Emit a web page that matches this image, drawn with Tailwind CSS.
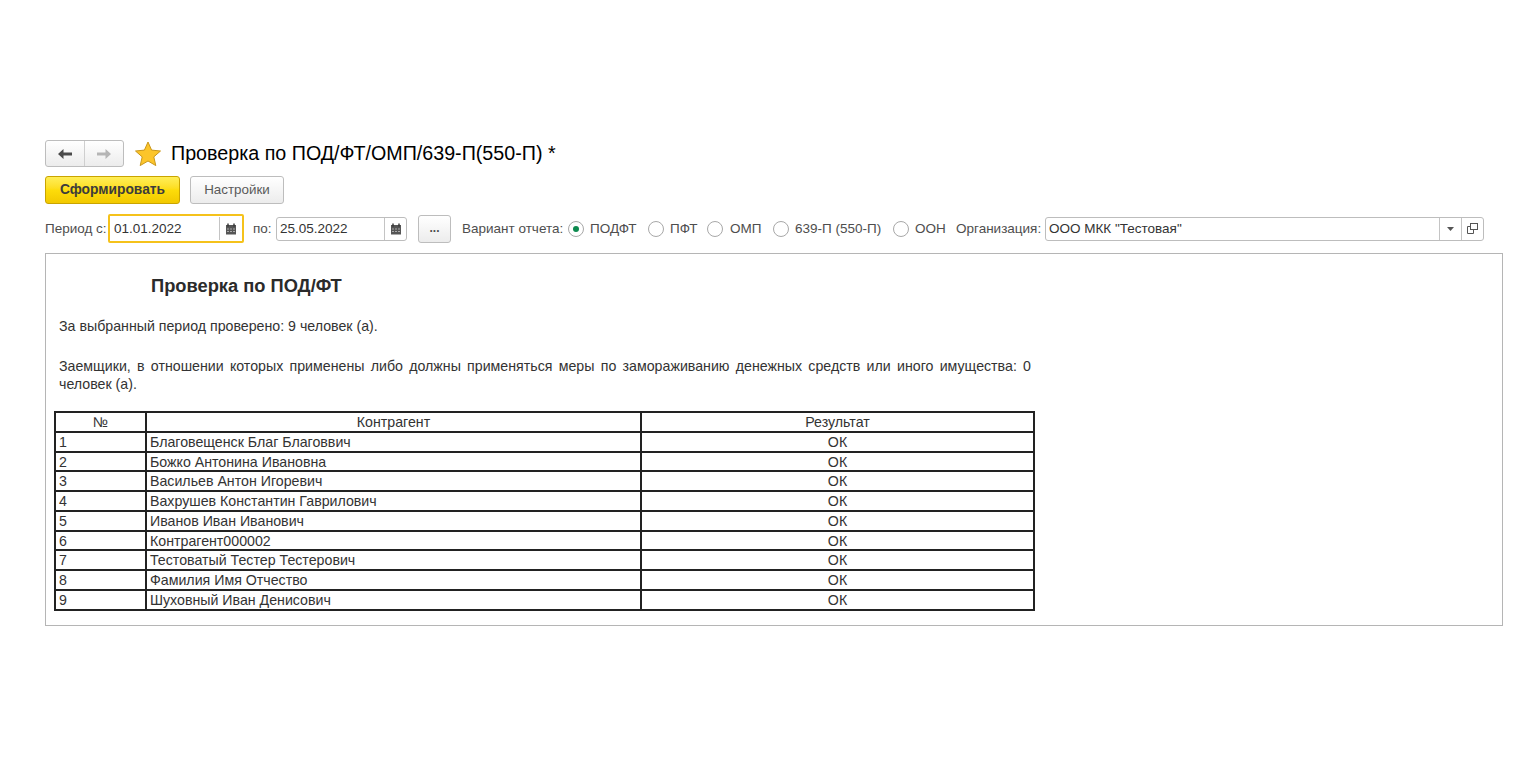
<!DOCTYPE html>
<html lang="ru">
<head>
    <meta charset="UTF-8" />
    <title>Проверка по ПОД/ФТ</title>
    <script src="https://cdn.jsdelivr.net/npm/@tailwindcss/browser@4"></script>
</head>
<body class="bg-white font-['Liberation_Sans',Arial,sans-serif] text-[#333]">
    <div class="w-[1539px] h-[780px] pt-[140px] pl-[45px] overflow-hidden">
        <!-- Заголовок -->
        <div class="flex items-center h-[27px]">
            <div class="flex w-[79px] h-[27px] rounded-[3px] border border-[#bdbdbd] bg-gradient-to-b from-white to-[#ececec]">
                <div class="w-[39px] flex items-center justify-center border-r border-[#cfcfcf]">
                    <svg width="16" height="12" viewBox="0 0 16 12"><path d="M1 6l5.5-5v3.6H15v2.8H6.5V11z" fill="#4a4a4a"/></svg>
                </div>
                <div class="flex-1 flex items-center justify-center">
                    <svg width="16" height="12" viewBox="0 0 16 12"><path d="M15 6L9.5 1v3.6H1v2.8h8.5V11z" fill="#b5b5b5"/></svg>
                </div>
            </div>
            <svg class="ml-[11px]" width="26" height="26" viewBox="0 0 26 26"><path d="M13 1l3.6 8.1 8.9.9-6.7 5.9 2 8.7L13 20l-7.8 4.6 2-8.7L.5 10l8.9-.9z" fill="#fcc52a" stroke="#c9971c" stroke-width="1"/></svg>
            <h1 class="ml-[10px] -mt-[2px] text-[19.7px] leading-[26px] text-black whitespace-nowrap">Проверка по ПОД/ФТ/ОМП/639-П(550-П) *</h1>
        </div>

        <!-- Кнопки -->
        <div class="flex gap-[10px] mt-[9px]">
            <button class="w-[135px] h-[28px] rounded-[3px] border border-[#c9a400] bg-gradient-to-b from-[#ffee55] via-[#fddc0a] to-[#f2c900] text-[13.8px] font-bold text-[#3c3c3c]">Сформировать</button>
            <button class="w-[94px] h-[28px] rounded-[3px] border border-[#bdbdbd] bg-gradient-to-b from-white to-[#ececec] text-[13.4px] text-[#5a5a5a]">Настройки</button>
        </div>

        <!-- Параметры -->
        <div class="flex items-center h-[29px] mt-[10px] w-[1439px] text-[13.5px] leading-[21px] text-[#4e4e4e] whitespace-nowrap">
            <span class="w-[60px] shrink-0">Период с:</span>
            <div class="ml-[3px] shrink-0 flex items-center w-[136px] h-[29px] rounded-[2px] border-2 border-[#f5c21b] bg-white">
                <span class="pl-[4px] w-[109px] text-[#333]">01.01.2022</span>
                <div class="flex-1 h-[23px] border-l border-[#c4c4c4] flex items-center justify-center">
                    <svg width="12" height="12" viewBox="0 0 12 12"><path d="M1 2h10v9.5H1z" fill="#555"/><path d="M3 .5v3M9 .5v3" stroke="#333" stroke-width="1.4"/><path d="M2.5 5.5h1v1h-1zM5.5 5.5h1v1h-1zM8.5 5.5h1v1h-1zM2.5 8h1v1h-1zM5.5 8h1v1h-1zM8.5 8h1v1h-1z" fill="#fff"/></svg>
                </div>
            </div>
            <span class="ml-[9px] w-[18px] shrink-0">по:</span>
            <div class="ml-[5px] shrink-0 flex items-center w-[131px] h-[24px] rounded-[3px] border border-[#bdbdbd] bg-white">
                <span class="pl-[3px] w-[107px] text-[#333]">25.05.2022</span>
                <div class="flex-1 h-full border-l border-[#c4c4c4] flex items-center justify-center">
                    <svg width="12" height="12" viewBox="0 0 12 12"><path d="M1 2h10v9.5H1z" fill="#555"/><path d="M3 .5v3M9 .5v3" stroke="#333" stroke-width="1.4"/><path d="M2.5 5.5h1v1h-1zM5.5 5.5h1v1h-1zM8.5 5.5h1v1h-1zM2.5 8h1v1h-1zM5.5 8h1v1h-1zM8.5 8h1v1h-1z" fill="#fff"/></svg>
                </div>
            </div>
            <button class="ml-[11px] shrink-0 w-[33px] h-[28px] rounded-[3px] border border-[#bdbdbd] bg-gradient-to-b from-white to-[#ececec] font-bold text-[12px] text-[#4e4e4e]">...</button>
            <span class="ml-[11px] w-[100px] shrink-0">Вариант отчета:</span>
            <span class="ml-[6px] shrink-0 w-[16px] h-[16px] rounded-full border border-[#a8a8a8] flex items-center justify-center"><span class="w-[6px] h-[6px] rounded-full bg-[#0d8a4f]"></span></span>
            <span class="ml-[6px] w-[46px] shrink-0">ПОДФТ</span>
            <span class="ml-[12px] shrink-0 w-[16px] h-[16px] rounded-full border border-[#a8a8a8]"></span>
            <span class="ml-[6px] w-[26px] shrink-0">ПФТ</span>
            <span class="ml-[11px] shrink-0 w-[16px] h-[16px] rounded-full border border-[#a8a8a8]"></span>
            <span class="ml-[7px] w-[31px] shrink-0">ОМП</span>
            <span class="ml-[12px] shrink-0 w-[16px] h-[16px] rounded-full border border-[#a8a8a8]"></span>
            <span class="ml-[6px] w-[86px] shrink-0">639-П (550-П)</span>
            <span class="ml-[12px] shrink-0 w-[16px] h-[16px] rounded-full border border-[#a8a8a8]"></span>
            <span class="ml-[6px] w-[30px] shrink-0">ООН</span>
            <span class="ml-[11px] w-[84px] shrink-0">Организация:</span>
            <div class="ml-[5px] shrink-0 flex items-center w-[439px] h-[24px] rounded-[3px] border border-[#bdbdbd] bg-white">
                <span class="flex-1 pl-[3px] text-[#333]">ООО МКК "Тестовая"</span>
                <div class="w-[22px] h-full border-l border-[#c4c4c4] flex items-center justify-center">
                    <svg width="7" height="4" viewBox="0 0 7 4"><path d="M0 0h7L3.5 4z" fill="#555"/></svg>
                </div>
                <div class="w-[22px] h-full border-l border-[#c4c4c4] flex items-center justify-center">
                    <svg width="11" height="11" viewBox="0 0 11 11" fill="none" stroke="#555"><rect x="3.5" y="0.5" width="7" height="6"/><path d="M3.5 3.5H.5v7h6V6.5"/></svg>
                </div>
            </div>
        </div>

        <!-- Отчёт -->
        <div class="mt-[10px] w-[1458px] h-[373px] border border-[#b5b5b5] bg-white pl-[9px] text-[14.2px] leading-[18px]">
            <h2 class="pt-[21px] pl-[96px] text-[18.3px] leading-[21px] font-bold text-[#2b2b2b]">Проверка по ПОД/ФТ</h2>
            <p class="mt-[21px] pl-[4px]">За выбранный период проверено: 9 человек (а).</p>
            <p class="mt-[22px] pl-[4px] w-[976px] text-justify">Заемщики, в отношении которых применены либо должны применяться меры по замораживанию денежных средств или иного имущества: 0 человек (а).</p>
            <table class="mt-[18px] -ml-[1px] w-[981px] table-fixed border-collapse border-2 border-[#222] leading-[16.75px] [&_td]:pt-[1px] [&_th]:pt-[1px]">
                <colgroup>
                    <col class="w-[91px]" />
                    <col class="w-[495px]" />
                    <col />
                </colgroup>
                <thead>
                    <tr>
                        <th class="border-2 border-[#222] font-normal p-0">№</th>
                        <th class="border-2 border-[#222] font-normal p-0">Контрагент</th>
                        <th class="border-2 border-[#222] font-normal p-0">Результат</th>
                    </tr>
                </thead>
                <tbody>
                    <tr><td class="border-2 border-[#222] p-0 pl-[3px]">1</td><td class="border-2 border-[#222] p-0 pl-[3px]">Благовещенск Благ Благоввич</td><td class="border-2 border-[#222] p-0 text-center">ОК</td></tr>
                    <tr><td class="border-2 border-[#222] p-0 pl-[3px]">2</td><td class="border-2 border-[#222] p-0 pl-[3px]">Божко Антонина Ивановна</td><td class="border-2 border-[#222] p-0 text-center">ОК</td></tr>
                    <tr><td class="border-2 border-[#222] p-0 pl-[3px]">3</td><td class="border-2 border-[#222] p-0 pl-[3px]">Васильев Антон Игоревич</td><td class="border-2 border-[#222] p-0 text-center">ОК</td></tr>
                    <tr><td class="border-2 border-[#222] p-0 pl-[3px]">4</td><td class="border-2 border-[#222] p-0 pl-[3px]">Вахрушев Константин Гаврилович</td><td class="border-2 border-[#222] p-0 text-center">ОК</td></tr>
                    <tr><td class="border-2 border-[#222] p-0 pl-[3px]">5</td><td class="border-2 border-[#222] p-0 pl-[3px]">Иванов Иван Иванович</td><td class="border-2 border-[#222] p-0 text-center">ОК</td></tr>
                    <tr><td class="border-2 border-[#222] p-0 pl-[3px]">6</td><td class="border-2 border-[#222] p-0 pl-[3px]">Контрагент000002</td><td class="border-2 border-[#222] p-0 text-center">ОК</td></tr>
                    <tr><td class="border-2 border-[#222] p-0 pl-[3px]">7</td><td class="border-2 border-[#222] p-0 pl-[3px]">Тестоватый Тестер Тестерович</td><td class="border-2 border-[#222] p-0 text-center">ОК</td></tr>
                    <tr><td class="border-2 border-[#222] p-0 pl-[3px]">8</td><td class="border-2 border-[#222] p-0 pl-[3px]">Фамилия Имя Отчество</td><td class="border-2 border-[#222] p-0 text-center">ОК</td></tr>
                    <tr><td class="border-2 border-[#222] p-0 pl-[3px]">9</td><td class="border-2 border-[#222] p-0 pl-[3px]">Шуховный Иван Денисович</td><td class="border-2 border-[#222] p-0 text-center">ОК</td></tr>
                </tbody>
            </table>
        </div>
    </div>
</body>
</html>
